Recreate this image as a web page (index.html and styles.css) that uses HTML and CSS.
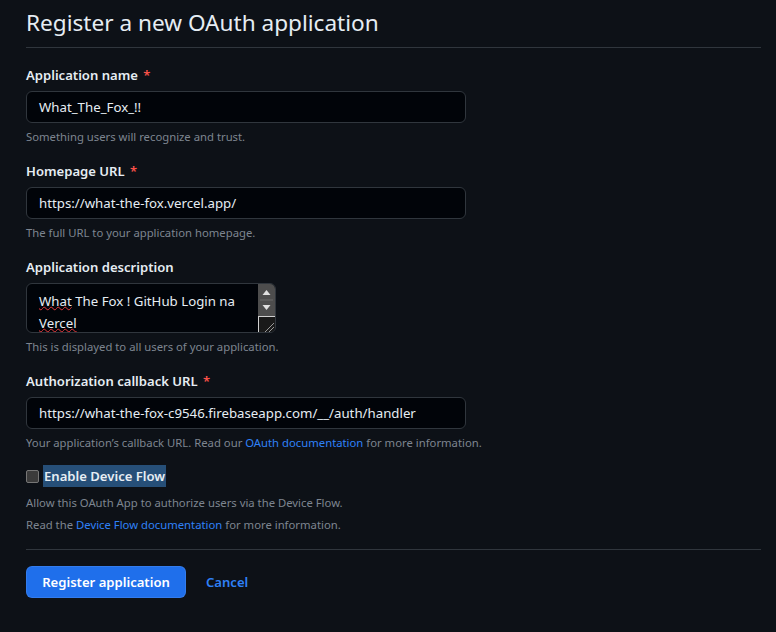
FILE: index.html
```html
<!DOCTYPE html>
<html>
<head>
<meta charset="utf-8">
<link rel="stylesheet" href="styles.css">
</head>
<body>
<div class="page">
  <h1 class="subhead">Register a new OAuth application</h1>

  <div class="group">
    <div class="label">Application name <span class="req">*</span></div>
    <div class="input">What_The_Fox_!!</div>
    <div class="note">Something users will recognize and trust.</div>
  </div>

  <div class="group">
    <div class="label">Homepage URL <span class="req">*</span></div>
    <div class="input">https://what-the-fox.vercel.app/</div>
    <div class="note">The full URL to your application homepage.</div>
  </div>

  <div class="group">
    <div class="label">Application description</div>
    <div class="textarea">
      <div class="ta-text"><span class="typo">What</span> The Fox ! GitHub Login na <span class="typo">Vercel</span></div>
      <div class="ta-bar">
        <div class="ta-scroll">
          <svg width="17" height="32" viewBox="0 0 17 32"><path d="M8.5 6 L12.5 11 L4.5 11 Z" fill="#e0e0e0"/><line x1="2" y1="16" x2="15" y2="16" stroke="#6a6a6a" stroke-width="1"/><path d="M8.5 26 L12.5 21 L4.5 21 Z" fill="#e0e0e0"/></svg>
        </div>
        <div class="ta-grip">
          <svg width="16" height="16" viewBox="0 0 16 16"><line x1="6" y1="15" x2="15" y2="6" stroke="#9a9a9a" stroke-width="1"/><line x1="10" y1="15" x2="15" y2="10" stroke="#9a9a9a" stroke-width="1"/></svg>
        </div>
      </div>
    </div>
    <div class="note">This is displayed to all users of your application.</div>
  </div>

  <div class="group">
    <div class="label">Authorization callback URL <span class="req">*</span></div>
    <div class="input">https://what-the-fox-c9546.firebaseapp.com/__/auth/handler</div>
    <div class="note">Your application’s callback URL. Read our <a class="link">OAuth documentation</a> for more information.</div>
  </div>

  <div class="check-group">
    <div class="check-row"><span class="checkbox"></span><span class="check-label">Enable Device Flow</span></div>
    <div class="note first">Allow this OAuth App to authorize users via the Device Flow.</div>
    <div class="note">Read the <a class="link">Device Flow documentation</a> for more information.</div>
  </div>

  <div class="actions">
    <button class="btn-primary">Register application</button>
    <a class="cancel">Cancel</a>
  </div>
</div>
</body>
</html>
```

FILE: styles.css
```css
html, body {
  margin: 0;
  padding: 0;
  background: #0d1117;
}
body {
  font-family: "Noto Sans", "Open Sans", sans-serif;
  color: #e6edf3;
  width: 776px;
  height: 632px;
  overflow: hidden;
}
.page {
  padding: 0 15px 0 26px;
}
.subhead {
  margin: 0;
  font-size: 22.6px;
  font-weight: 400;
  line-height: 36px;
  padding-top: 5px;
  padding-bottom: 6px;
  border-bottom: 1px solid #30363d;
  color: #e6edf3;
}
.group {
  margin-top: 15px;
}
.group:first-of-type { margin-top: 17px; }
.label {
  font-size: 13.1px;
  font-weight: 600;
  line-height: 20px;
  margin-bottom: 6px;
}
.req {
  color: #f85149;
  margin-left: 2px;
}
.input {
  box-sizing: border-box;
  width: 440px;
  height: 32px;
  padding: 0 12px;
  background: #010409;
  border: 1px solid #30363d;
  border-radius: 6px;
  font-size: 13.25px;
  line-height: 30px;
  color: #e6edf3;
  white-space: nowrap;
}
.note {
  font-size: 11.3px;
  line-height: 18px;
  color: #7d8590;
  margin-top: 5px;
}
.link {
  color: #2f81f7;
  text-decoration: none;
}
.textarea {
  box-sizing: border-box;
  width: 250px;
  height: 50px;
  display: flex;
  background: #010409;
  border: 1px solid #30363d;
  border-radius: 6px;
  overflow: hidden;
}
.ta-text {
  flex: 1;
  padding: 6px 0 0 12px;
  font-size: 13.25px;
  line-height: 22px;
}
.typo {
  text-decoration: underline wavy #e5383b;
  text-decoration-thickness: 1px;
  text-underline-offset: 0px;
}
.ta-bar {
  width: 17px;
  display: flex;
  flex-direction: column;
}
.ta-scroll {
  height: 32px;
  background: #4d4d4d;
}
.ta-scroll svg, .ta-grip svg { display: block; }
.ta-grip {
  flex: 1;
  background: #1a1a1a;
  border: 1px solid #d0d0d0;
  border-right: none;
  border-bottom: none;
  display: flex;
  align-items: flex-end;
  justify-content: flex-end;
}
.check-group {
  margin-top: 13px;
}
.check-row {
  display: flex;
  align-items: center;
  height: 22px;
}
.checkbox {
  box-sizing: border-box;
  width: 13px;
  height: 13px;
  border: 1px solid #767676;
  background: #3b3b3b;
  border-radius: 2px;
  margin-right: 4px;
}
.check-label {
  font-size: 13.1px;
  font-weight: 600;
  line-height: 22px;
  background: #264f78;
  padding: 0 1px;
}
.check-group .note { margin-top: 4px; }
.check-group .note.first { margin-top: 7px; }
.actions {
  margin-top: 15px;
  border-top: 1px solid #30363d;
  padding-top: 16px;
  display: flex;
  align-items: center;
}
.btn-primary {
  height: 32px;
  width: 160px;
  padding: 0;
  border: 1px solid rgba(240,246,252,0.1);
  border-radius: 6px;
  background: #1f6feb;
  color: #ffffff;
  font-family: inherit;
  font-size: 13.1px;
  font-weight: 600;
}
.cancel {
  margin-left: 20px;
  color: #2f81f7;
  font-size: 13.1px;
  font-weight: 600;
}
```
